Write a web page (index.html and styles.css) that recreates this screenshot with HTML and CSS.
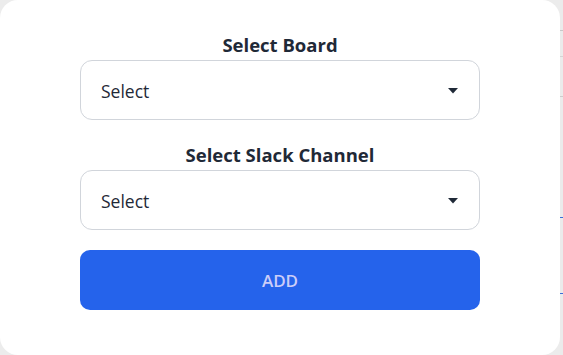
FILE: index.html
```html
<!DOCTYPE html>
<html lang="en">
<head>
<meta charset="utf-8">
<title>Add Slack Channel</title>
<link rel="stylesheet" href="styles.css">
</head>
<body>
<div class="screen">
  <div class="card">
    <div class="field">
      <label class="label">Select Board</label>
      <div class="select">
        <span class="value">Select</span>
        <svg class="caret" width="10" height="6" viewBox="0 0 10 6"><path d="M0 0H10L5 5.5Z" fill="#1f2937"/></svg>
      </div>
    </div>
    <div class="field second">
      <label class="label">Select Slack Channel</label>
      <div class="select">
        <span class="value">Select</span>
        <svg class="caret" width="10" height="6" viewBox="0 0 10 6"><path d="M0 0H10L5 5.5Z" fill="#1f2937"/></svg>
      </div>
    </div>
    <button class="add">ADD</button>
  </div>
  <div class="strip"></div>
</div>
</body>
</html>
```
FILE: styles.css
```css
* { box-sizing: border-box; }
html, body { margin: 0; padding: 0; }
body {
  background: #ececec;
  font-family: "Open Sans", "Noto Sans", sans-serif;
  color: #1f2937;
}
.screen {
  display: flex;
  width: 563px;
  height: 355px;
  overflow: hidden;
}
.card {
  width: 560px;
  height: 355px;
  background: #ffffff;
  border-radius: 18px;
  padding: 33px 80px 0;
  display: flex;
  flex-direction: column;
}
.strip {
  width: 3px;
  height: 355px;
  background:
    linear-gradient(#c8c8c8, #c8c8c8) 0 30px / 3px 1px no-repeat,
    linear-gradient(#d4d4d4, #d4d4d4) 0 56px / 3px 1px no-repeat,
    linear-gradient(#cccccc, #cccccc) 0 96px / 3px 1px no-repeat,
    linear-gradient(#3b6fd8, #3b6fd8) 0 217px / 3px 1px no-repeat,
    linear-gradient(#3b6fd8, #3b6fd8) 0 293px / 3px 1px no-repeat,
    #ebebeb;
}
.field {
  display: flex;
  flex-direction: column;
  align-items: stretch;
}
.field.second { margin-top: 23px; }
.label {
  display: block;
  text-align: center;
  font-size: 18.5px;
  font-weight: 700;
  line-height: 24px;
  margin-bottom: 3px;
  color: #1f2937;
}
.select {
  height: 60px;
  border: 1px solid #d1d5db;
  border-radius: 12px;
  display: flex;
  align-items: center;
  justify-content: space-between;
  padding: 0 21px 0 20px;
}
.value {
  font-size: 17.5px;
  color: #1f2937;
  margin-top: 1px;
}
.caret { display: block; margin-top: 1px; }
.add {
  margin-top: 20px;
  height: 60px;
  border: none;
  border-radius: 10px;
  background: #2563eb;
  color: #cbcdf8;
  font-family: "Open Sans", "Noto Sans", sans-serif;
  font-size: 17px;
  font-weight: 600;
  cursor: pointer;
}
```
